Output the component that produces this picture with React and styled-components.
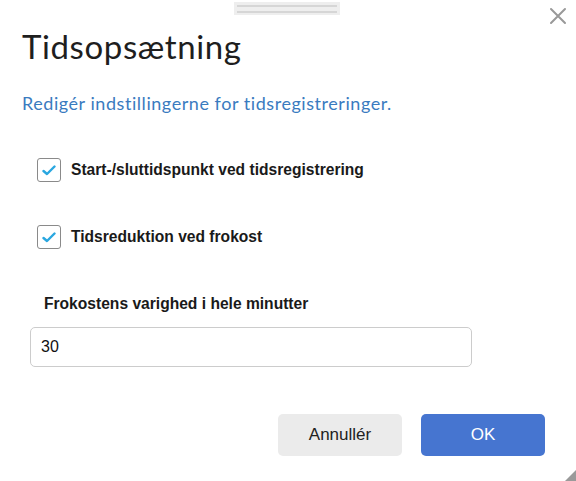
import React from "react";
import styled, { createGlobalStyle } from "styled-components";

const GlobalStyle = createGlobalStyle`
  html, body {
    margin: 0;
    padding: 0;
    background: #fff;
  }
  body {
    font-family: "Liberation Sans", Arial, sans-serif;
    color: #222;
  }
`;

const Dialog = styled.div`
  position: relative;
  width: 576px;
  height: 481px;
  box-sizing: border-box;
  background: #fff;
  padding: 27px 22px 0 22px;
  overflow: hidden;
`;

const DragHandle = styled.div`
  position: absolute;
  top: 2px;
  left: 234px;
  width: 106px;
  height: 13px;
  background: #eeeeee;
  display: flex;
  flex-direction: column;
  justify-content: center;
  gap: 4px;
  padding: 0 3px;
  box-sizing: border-box;
  span {
    display: block;
    height: 2px;
    background: #d6d6d6;
  }
`;

const CloseButton = styled.button`
  position: absolute;
  top: 6px;
  right: 8px;
  width: 20px;
  height: 20px;
  padding: 0;
  border: none;
  background: none;
  cursor: pointer;
  svg {
    display: block;
  }
`;

const Title = styled.h1`
  margin: 0;
  font-family: "Lato", sans-serif;
  font-weight: 400;
  font-size: 33px;
  letter-spacing: 0.6px;
  line-height: 38px;
  color: #1e1e1e;
`;

const Subtitle = styled.p`
  margin: 27px 0 0 0;
  font-family: "Lato", sans-serif;
  font-size: 18px;
  letter-spacing: 0.55px;
  line-height: 22px;
  color: #3a7bbf;
`;

const CheckRow = styled.label`
  display: flex;
  align-items: center;
  gap: 10px;
  margin: ${(p) => p.$top}px 0 0 15px;
  font-weight: 700;
  font-size: 15.6px;
  color: #1a1a1a;
  cursor: pointer;
`;

const Box = styled.span`
  width: 22px;
  height: 22px;
  border: 1px solid #8a8a8a;
  border-radius: 3px;
  display: flex;
  align-items: center;
  justify-content: center;
  background: #fff;
`;

const FieldLabel = styled.div`
  margin: 46px 0 0 22px;
  font-weight: 700;
  font-size: 15.6px;
  color: #1a1a1a;
`;

const Input = styled.input`
  display: block;
  margin: 14px 0 0 8px;
  width: 442px;
  height: 40px;
  box-sizing: border-box;
  border: 1px solid #cccccc;
  border-radius: 5px;
  padding: 0 10px;
  font-family: "Liberation Sans", Arial, sans-serif;
  font-size: 16px;
  color: #111;
  outline: none;
`;

const Footer = styled.div`
  display: flex;
  justify-content: flex-end;
  gap: 19px;
  margin-top: 47px;
  padding-right: 9px;
`;

const Button = styled.button`
  width: 124px;
  height: 42px;
  border: none;
  border-radius: 5px;
  font-family: "Liberation Sans", Arial, sans-serif;
  font-size: 17px;
  background: ${(p) => (p.$primary ? "#4675d0" : "#ebebeb")};
  color: ${(p) => (p.$primary ? "#fff" : "#222")};
  cursor: pointer;
`;

const ResizeGrip = styled.div`
  position: absolute;
  right: 0;
  bottom: 0;
  width: 0;
  height: 0;
  border-style: solid;
  border-width: 0 0 11px 11px;
  border-color: transparent transparent #9a9a9a transparent;
`;

const Check = () => (
  <svg width="14" height="11" viewBox="0 0 14 11">
    <path
      d="M1.5 6 L5 9 L12.5 1.5"
      fill="none"
      stroke="#2aa7e0"
      strokeWidth="2.4"
      strokeLinecap="round"
      strokeLinejoin="round"
    />
  </svg>
);

export default function App() {
  return (
    <>
      <GlobalStyle />
      <Dialog>
        <DragHandle>
          <span />
          <span />
        </DragHandle>
        <CloseButton aria-label="Luk">
          <svg width="20" height="20" viewBox="0 0 20 20">
            <path
              d="M3 3 L17 17 M17 3 L3 17"
              stroke="#999"
              strokeWidth="2"
              strokeLinecap="round"
            />
          </svg>
        </CloseButton>
        <Title>Tidsopsætning</Title>
        <Subtitle>Redigér indstillingerne for tidsregistreringer.</Subtitle>
        <CheckRow $top={44}>
          <Box>
            <Check />
          </Box>
          Start-/sluttidspunkt ved tidsregistrering
        </CheckRow>
        <CheckRow $top={43}>
          <Box>
            <Check />
          </Box>
          Tidsreduktion ved frokost
        </CheckRow>
        <FieldLabel>Frokostens varighed i hele minutter</FieldLabel>
        <Input defaultValue="30" />
        <Footer>
          <Button>Annullér</Button>
          <Button $primary>OK</Button>
        </Footer>
        <ResizeGrip />
      </Dialog>
    </>
  );
}
